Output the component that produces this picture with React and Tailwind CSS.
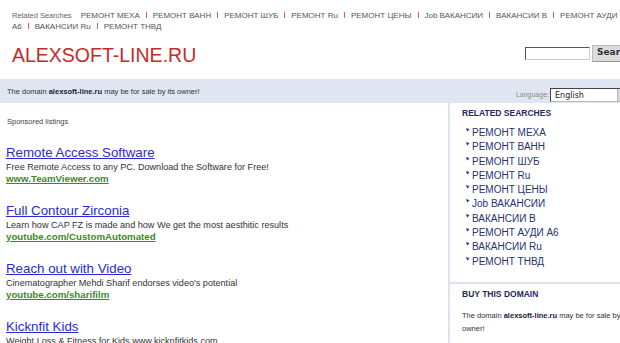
const topLinks = [
  'РЕМОНТ МЕХА',
  'РЕМОНТ ВАНН',
  'РЕМОНТ ШУБ',
  'РЕМОНТ Ru',
  'РЕМОНТ ЦЕНЫ',
  'Job ВАКАНСИИ',
  'ВАКАНСИИ В',
  'РЕМОНТ АУДИ А6',
  'ВАКАНСИИ Ru',
  'РЕМОНТ ТНВД',
]

const ads = [
  {
    title: 'Remote Access Software',
    text: 'Free Remote Access to any PC. Download the Software for Free!',
    url: 'www.TeamViewer.com',
  },
  {
    title: 'Full Contour Zirconia',
    text: 'Learn how CAP FZ is made and how We get the most aesthitic results',
    url: 'youtube.com/CustomAutomated',
  },
  {
    title: 'Reach out with Video',
    text: "Cinematographer Mehdi Sharif endorses video's potential",
    url: 'youtube.com/sharifilm',
  },
  {
    title: 'Kicknfit Kids',
    text: 'Weight Loss & Fitness for Kids www.kicknfitkids.com',
    url: 'www.kicknfitkids.com',
  },
]

function Bullet() {
  return (
    <svg width="4" height="4" viewBox="0 0 4 4" className="absolute left-0 top-[2px]">
      <path d="M0 0 L3.5 1.2 L1.2 3.5 Z" fill="#28336e" />
    </svg>
  )
}

export default function App() {
  return (
    <div className="w-[620px] h-[343px] overflow-hidden bg-white font-['Liberation_Sans',Arial,sans-serif]">
      <div className="w-[653px]">
        {/* related searches strip */}
        <div className="pt-[10px] pl-[12px] w-[622px] text-[8px] leading-[11px] text-[#555]">
          <span className="text-[7.5px] text-[#666] mr-[9px]">Related Searches</span>
          {topLinks.map((l, i) => (
            <span key={l}>
              {i > 0 && (
                <span className="inline-block w-px h-[6px] bg-[#e05a5a] mx-[6px] align-baseline" />
              )}
              <a href="#" className="hover:underline">{l}</a>
            </span>
          ))}
        </div>

        {/* header */}
        <div className="flex items-center h-[46px] pl-[12px]">
          <h1 className="text-[19.5px] leading-[22px] text-[#c62a2a]">ALEXSOFT-LINE.RU</h1>
          <div className="ml-auto flex items-center gap-[2px] pr-[15px] -mt-[4px]">
            <input
              className="w-[65px] h-[13px] border border-t-[#555] border-l-[#555] border-r-[#ccc] border-b-[#ccc] bg-white"
              type="text"
            />
            <button className="w-[46px] h-[17px] text-left pl-[4px] bg-[#dcdcdc] border border-[#bbb] border-b-[#999] text-[9px] font-bold text-[#333] font-['DejaVu_Sans',sans-serif]">
              Search
            </button>
          </div>
        </div>

        {/* domain bar */}
        <div className="flex items-center h-[24px] mt-[1px] bg-[#dfe6f2] pl-[7px]">
          <p className="text-[7.5px] text-[#333] pt-[1px]">
            The domain <b className="text-[#1a1a3a]">alexsoft-line.ru</b> may be for sale by its owner!
          </p>
          <div className="ml-auto flex items-center self-end mb-[1px] pr-[27px]">
            <span className="text-[7px] text-[#888] mr-[1px]">Language:</span>
            <div className="w-[76px] h-[14px] flex bg-white border border-t-[#444] border-l-[#444] border-r-[#bbb] border-b-[#bbb]">
              <span className="flex-1 pl-[4px] text-[8px] leading-[13px] text-[#222] font-['DejaVu_Sans',sans-serif]">English</span>
              <span className="w-[8px] bg-[#d8d8d8] border-l border-[#bbb]" />
            </div>
          </div>
        </div>

        {/* main */}
        <div className="flex">
          <div className="w-[448px] pl-[6px]">
            <p className="pt-[14px] pl-[1px] text-[7.5px] leading-[10px] text-[#444]">Sponsored listings</p>
            <div className="mt-[18px] flex flex-col gap-[18px]">
              {ads.map((ad) => (
                <div key={ad.title}>
                  <a href="#" className="block text-[13.3px] leading-[16px] text-[#2a2ad2] underline">
                    {ad.title}
                  </a>
                  <p className="text-[9.1px] leading-[12px] text-[#333]">{ad.text}</p>
                  <a href="#" className="block text-[9.7px] leading-[12px] font-bold text-[#3d8a1e] underline">
                    {ad.url}
                  </a>
                </div>
              ))}
            </div>
          </div>

          <div className="w-[205px] border-l-2 border-[#dbe3f1] h-[260px]">
            <div className="pl-[12px] pr-[10px] pt-[4px] pb-[13px]">
              <h2 className="text-[8.5px] leading-[12px] font-bold text-[#1f2a62]">RELATED SEARCHES</h2>
              <ul className="mt-[7px]">
                {topLinks.map((l) => (
                  <li key={l} className="relative pl-[10px] text-[10px] leading-[14.3px] text-[#28336e]">
                    <span className="absolute left-[4px] top-0 h-full">
                      <Bullet />
                    </span>
                    <a href="#">{l}</a>
                  </li>
                ))}
              </ul>
            </div>
            <div className="border-t-2 border-[#dbe3f1] pl-[12px] pr-[10px] pt-[4px]">
              <h2 className="text-[8.5px] leading-[12px] font-bold text-[#1f2a62]">BUY THIS DOMAIN</h2>
              <p className="mt-[9px] w-[182px] text-[7.5px] leading-[13px] text-[#333]">
                The domain <b className="text-[#1a1a3a]">alexsoft-line.ru</b> may be for sale by its owner!
              </p>
            </div>
          </div>
        </div>
      </div>
    </div>
  )
}
